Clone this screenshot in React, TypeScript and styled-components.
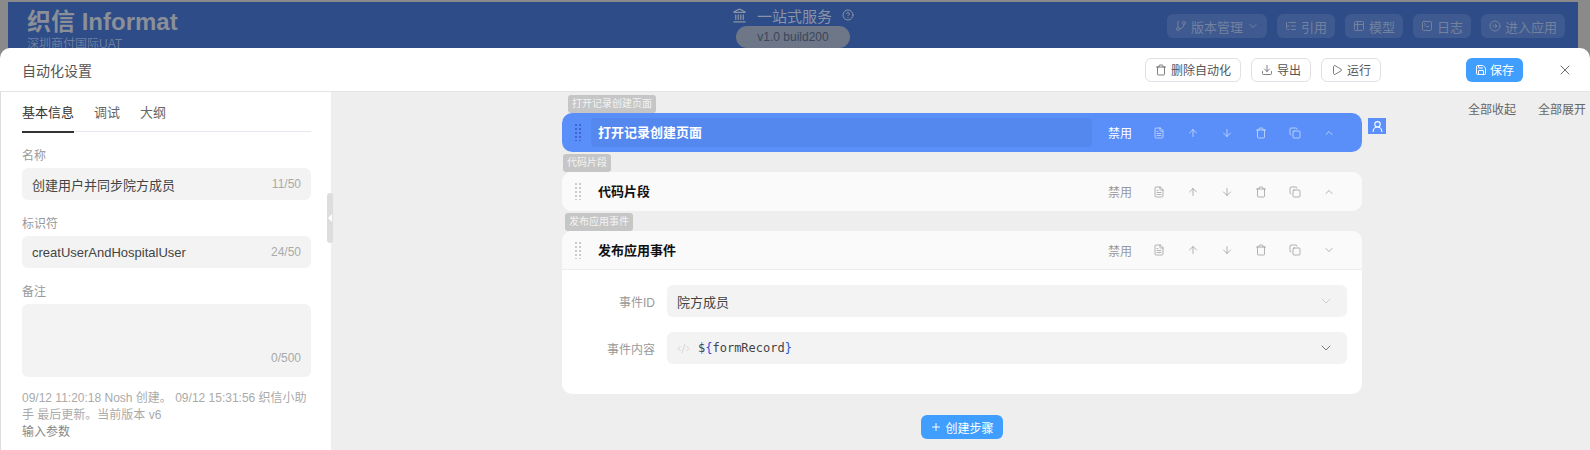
import { createGlobalStyle, styled } from "styled-components";
import {
  ArrowDown,
  ArrowUp,
  ChevronDown,
  ChevronUp,
  CircleArrowRight,
  CircleHelp,
  Code2,
  Copy,
  Download,
  FileText,
  GitBranch,
  Landmark,
  ListTree,
  Play,
  Plus,
  Save,
  SquareTerminal,
  Table2,
  Trash,
  UserRound,
  X,
} from "lucide-react";

const Global = createGlobalStyle`
  html, body { margin: 0; padding: 0; }
  body {
    width: 1590px;
    height: 450px;
    overflow: hidden;
    background: #8a8a8a;
    font-family: "Liberation Sans", "Noto Sans CJK SC", sans-serif;
  }
  * { box-sizing: border-box; }
`;

const Page = styled.div`
  width: 1590px;
  height: 450px;
  display: flex;
  flex-direction: column;
`;

const TopBar = styled.header`
  height: 46px;
  flex: none;
  margin: 2px 12px 0 8px;
  background: #2d4c88;
  display: grid;
  grid-template-columns: 1fr 240px 1fr;
  overflow: hidden;
`;

const Brand = styled.div`
  padding: 6px 0 0 19px;
  color: #8a8f98;
`;

const Logo = styled.div`
  font-family: "Liberation Sans Narrow", "Liberation Sans", "Noto Sans CJK SC", sans-serif;
  font-size: 24px;
  line-height: 28px;
  font-weight: 700;
  white-space: nowrap;
`;

const Tenant = styled.div`
  font-size: 12px;
  line-height: 14px;
  margin-top: 1px;
  color: #6f7f9f;
`;

const Center = styled.div`
  display: flex;
  flex-direction: column;
  align-items: center;
  padding-top: 4px;
`;

const AppTitle = styled.div`
  display: flex;
  align-items: center;
  gap: 10px;
  height: 18px;
  color: #8b93a6;
  font-size: 15px;
`;

const VersionPill = styled.div`
  margin-top: 2px;
  width: 114px;
  height: 22px;
  border-radius: 11px;
  background: #6e7787;
  color: #39465c;
  font-size: 12px;
  line-height: 22px;
  text-align: center;
`;

const TopActions = styled.div`
  display: flex;
  justify-content: flex-end;
  align-items: flex-start;
  gap: 10px;
  padding: 12px 13px 0 0;
`;

const TopAction = styled.div`
  height: 24px;
  padding: 0 8px;
  display: flex;
  align-items: center;
  gap: 4px;
  border-radius: 6px;
  background: #3e5a90;
  color: #73819f;
  font-size: 13px;
  white-space: nowrap;
`;

const Drawer = styled.div`
  flex: 1;
  min-height: 0;
  display: flex;
  flex-direction: column;
  background: #fff;
  border-radius: 10px 10px 0 0;
  overflow: hidden;
`;

const DrawerHead = styled.div`
  height: 44px;
  flex: none;
  display: flex;
  align-items: center;
  padding: 0 17px 0 22px;
  border-bottom: 1px solid #e4e4e4;
`;

const DrawerTitle = styled.div`
  flex: 1;
  font-size: 14px;
  color: #555;
`;

const OutlineButton = styled.button`
  height: 24px;
  margin-left: 10px;
  padding: 0 9px;
  display: flex;
  align-items: center;
  gap: 4px;
  background: #fff;
  border: 1px solid #e0e0e6;
  border-radius: 6px;
  color: #555;
  font: inherit;
  font-size: 12px;
  white-space: nowrap;
`;

const PrimaryButton = styled.button`
  height: 24px;
  padding: 0 9px;
  display: flex;
  align-items: center;
  gap: 3px;
  background: #409eff;
  border: 0;
  border-radius: 6px;
  color: #fff;
  font: inherit;
  font-size: 12px;
  white-space: nowrap;
`;

const SaveSlot = styled.div`
  margin-left: 85px;
  margin-right: 34px;
`;

const Body = styled.div`
  flex: 1;
  min-height: 0;
  display: flex;
`;

const Sidebar = styled.aside`
  width: 331px;
  flex: none;
  padding: 0 20px 0 21px;
  background: #fff;
  border-left: 1px solid #ddd;
  color: #999;
  font-size: 13px;
`;

const Tabs = styled.div`
  display: flex;
  gap: 20px;
  height: 40px;
  border-bottom: 1px solid #e6e6ee;
`;

const Tab = styled.div<{ $active?: boolean }>`
  height: 41px;
  line-height: 41px;
  font-size: 13px;
  color: ${(p) => (p.$active ? "#333" : "#666")};
  border-bottom: 2px solid ${(p) => (p.$active ? "#333" : "transparent")};
`;

const FieldLabel = styled.div`
  margin-top: 12px;
  height: 24px;
  line-height: 24px;
  font-size: 12px;
  color: #999;
`;

const TextField = styled.div<{ $tall?: boolean }>`
  height: ${(p) => (p.$tall ? "73px" : "32px")};
  display: flex;
  justify-content: space-between;
  align-items: ${(p) => (p.$tall ? "flex-end" : "center")};
  padding: ${(p) => (p.$tall ? "0 10px 12px" : "0 10px")};
  background: #f3f3f3;
  border-radius: 6px;
  color: #444;
  font-size: 13px;
`;

const Count = styled.span`
  color: #aaa;
  font-size: 12px;
`;

const Meta = styled.div`
  margin-top: 13px;
  font-size: 12px;
  line-height: 17px;
  color: #aaa;
`;

const SubHeading = styled.div`
  font-size: 12px;
  line-height: 17px;
  color: #888;
`;

const Canvas = styled.main`
  position: relative;
  flex: 1;
  min-width: 0;
  padding: 21px 228px 0 231px;
  background: #eee;
`;

const Collapse = styled.div`
  position: absolute;
  left: -4px;
  top: 101px;
  width: 6px;
  height: 50px;
  border-radius: 3px;
  background: #ddd;

  &::after {
    content: "";
    position: absolute;
    left: 1px;
    top: 21px;
    border: 4px solid transparent;
    border-left: 0;
    border-right-color: #fff;
  }
`;

const ExpandLinks = styled.div`
  position: absolute;
  top: 8px;
  right: 4px;
  display: flex;
  gap: 22px;
  font-size: 12px;
  color: #666;
`;

const UserBadge = styled.div`
  position: absolute;
  top: 26px;
  left: 1037px;
  width: 18px;
  height: 16px;
  display: flex;
  align-items: center;
  justify-content: center;
  background: #5b8ff9;
  color: #fff;
`;

const Steps = styled.div`
  display: flex;
  flex-direction: column;
  gap: 20px;
`;

const Step = styled.section`
  position: relative;
  background: #fff;
  border-radius: 10px;
`;

const StepTag = styled.span<{ $left: number }>`
  position: absolute;
  left: ${(p) => p.$left}px;
  top: -18px;
  height: 18px;
  padding: 0 4px;
  border-radius: 3px;
  background: #c6c6c6;
  color: #f3f3f3;
  font-size: 10px;
  line-height: 18px;
  white-space: nowrap;
`;

const StepHead = styled.div<{ $active?: boolean; $open?: boolean }>`
  height: 39px;
  display: flex;
  align-items: center;
  padding: 0 16px 0 13px;
  background: ${(p) => (p.$active ? "#5a8ffa" : "#fafafa")};
  border-radius: ${(p) => (p.$open ? "10px 10px 0 0" : "10px")};
  border-bottom: ${(p) => (p.$open ? "1px solid #eee" : "0")};
  color: ${(p) => (p.$active ? "#fff" : "#999")};
`;

const Grip = styled.div<{ $active?: boolean }>`
  width: 7px;
  height: 17px;
  flex: none;
  margin-right: 9px;
  background-image: radial-gradient(
    circle at 1px 1px,
    ${(p) => (p.$active ? "#3f63d8" : "#ccc")} 1px,
    transparent 1.2px
  );
  background-size: 4px 4px;
`;

const StepName = styled.div<{ $active?: boolean }>`
  flex: 1;
  height: 29px;
  line-height: 29px;
  padding-left: 7px;
  margin-right: 16px;
  border-radius: 4px;
  background: ${(p) => (p.$active ? "#5588ee" : "transparent")};
  color: ${(p) => (p.$active ? "#fff" : "#111")};
  font-size: 13px;
  font-weight: 700;
`;

const DisableLabel = styled.span`
  font-size: 12px;
  width: 24px;
  margin-right: 10px;
  white-space: nowrap;
`;

const IconSlot = styled.span<{ $faint?: boolean }>`
  width: 34px;
  display: flex;
  justify-content: center;
  opacity: ${(p) => (p.$faint ? 0.75 : 1)};
`;

const StepBody = styled.div`
  padding: 15px 15px 30px 0;
  display: flex;
  flex-direction: column;
  gap: 15px;
`;

const Row = styled.div`
  display: flex;
  align-items: center;
  gap: 12px;
`;

const RowLabel = styled.label`
  width: 93px;
  text-align: right;
  font-size: 12px;
  color: #999;
`;

const SelectBox = styled.div`
  flex: 1;
  height: 32px;
  display: flex;
  align-items: center;
  padding: 0 13px 0 10px;
  background: #f3f3f3;
  border-radius: 6px;
  color: #444;
  font-size: 13px;
`;

const SelectValue = styled.div`
  flex: 1;
  display: flex;
  align-items: center;
  gap: 8px;
`;

const Code = styled.span`
  font-family: "DejaVu Sans Mono", "Liberation Mono", monospace;
  font-size: 12px;
  color: #444;
`;

const Brace = styled.span`
  color: #2a50d8;
`;

const AddRow = styled.div`
  display: flex;
  justify-content: center;
  margin-top: 21px;
`;

const steps = [
  { name: "打开记录创建页面", tagLeft: 6, active: true },
  { name: "代码片段", tagLeft: 1 },
  { name: "发布应用事件", tagLeft: 3, open: true },
];

function StepIcons({ active, open }: { active?: boolean; open?: boolean }) {
  const Chevron = open ? ChevronDown : ChevronUp;
  return (
    <>
      <IconSlot $faint={active}><FileText size={12} strokeWidth={1.5} /></IconSlot>
      <IconSlot $faint={active}><ArrowUp size={12} strokeWidth={1.5} /></IconSlot>
      <IconSlot $faint={active}><ArrowDown size={12} strokeWidth={1.5} /></IconSlot>
      <IconSlot $faint={active}><Trash size={12} strokeWidth={1.5} /></IconSlot>
      <IconSlot $faint={active}><Copy size={12} strokeWidth={1.5} /></IconSlot>
      <IconSlot $faint={active}><Chevron size={12} strokeWidth={1.5} /></IconSlot>
    </>
  );
}

export default function App() {
  return (
    <Page>
      <Global />
      <TopBar>
        <Brand>
          <Logo>织信 Informat</Logo>
          <Tenant>深圳商付国际UAT</Tenant>
        </Brand>
        <Center>
          <AppTitle>
            <Landmark size={15} />
            <span>一站式服务</span>
            <CircleHelp size={12} />
          </AppTitle>
          <VersionPill>v1.0 build200</VersionPill>
        </Center>
        <TopActions>
          <TopAction><GitBranch size={12} />版本管理<ChevronDown size={12} /></TopAction>
          <TopAction><ListTree size={12} />引用</TopAction>
          <TopAction><Table2 size={12} />模型</TopAction>
          <TopAction><SquareTerminal size={12} />日志</TopAction>
          <TopAction><CircleArrowRight size={12} />进入应用</TopAction>
        </TopActions>
      </TopBar>
      <Drawer>
        <DrawerHead>
          <DrawerTitle>自动化设置</DrawerTitle>
          <OutlineButton><Trash size={12} strokeWidth={1.5} />删除自动化</OutlineButton>
          <OutlineButton><Download size={12} strokeWidth={1.5} />导出</OutlineButton>
          <OutlineButton><Play size={12} strokeWidth={1.5} />运行</OutlineButton>
          <SaveSlot>
            <PrimaryButton><Save size={12} />保存</PrimaryButton>
          </SaveSlot>
          <X size={16} strokeWidth={1.3} color="#555" />
        </DrawerHead>
        <Body>
          <Sidebar>
            <Tabs>
              <Tab $active>基本信息</Tab>
              <Tab>调试</Tab>
              <Tab>大纲</Tab>
            </Tabs>
            <FieldLabel>名称</FieldLabel>
            <TextField>创建用户并同步院方成员<Count>11/50</Count></TextField>
            <FieldLabel>标识符</FieldLabel>
            <TextField>creatUserAndHospitalUser<Count>24/50</Count></TextField>
            <FieldLabel>备注</FieldLabel>
            <TextField $tall><span /><Count>0/500</Count></TextField>
            <Meta>09/12 11:20:18 Nosh 创建。 09/12 15:31:56 织信小助手 最后更新。当前版本 v6</Meta>
            <SubHeading>输入参数</SubHeading>
          </Sidebar>
          <Canvas>
            <Collapse />
            <ExpandLinks><span>全部收起</span><span>全部展开</span></ExpandLinks>
            <UserBadge><UserRound size={13} /></UserBadge>
            <Steps>
              {steps.map((step) => (
                <Step key={step.name}>
                  <StepTag $left={step.tagLeft}>{step.name}</StepTag>
                  <StepHead $active={step.active} $open={step.open}>
                    <Grip $active={step.active} />
                    <StepName $active={step.active}>{step.name}</StepName>
                    <DisableLabel>禁用</DisableLabel>
                    <StepIcons active={step.active} open={step.open} />
                  </StepHead>
                  {step.open && (
                    <StepBody>
                      <Row>
                        <RowLabel>事件ID</RowLabel>
                        <SelectBox>
                          <SelectValue>院方成员</SelectValue>
                          <ChevronDown size={16} strokeWidth={1} color="#bbb" />
                        </SelectBox>
                      </Row>
                      <Row>
                        <RowLabel>事件内容</RowLabel>
                        <SelectBox>
                          <SelectValue>
                            <Code2 size={13} strokeWidth={1} color="#bbb" />
                            <Code>$<Brace>{"{"}</Brace>formRecord<Brace>{"}"}</Brace></Code>
                          </SelectValue>
                          <ChevronDown size={16} strokeWidth={1.3} color="#666" />
                        </SelectBox>
                      </Row>
                    </StepBody>
                  )}
                </Step>
              ))}
            </Steps>
            <AddRow>
              <PrimaryButton><Plus size={12} />创建步骤</PrimaryButton>
            </AddRow>
          </Canvas>
        </Body>
      </Drawer>
    </Page>
  );
}
